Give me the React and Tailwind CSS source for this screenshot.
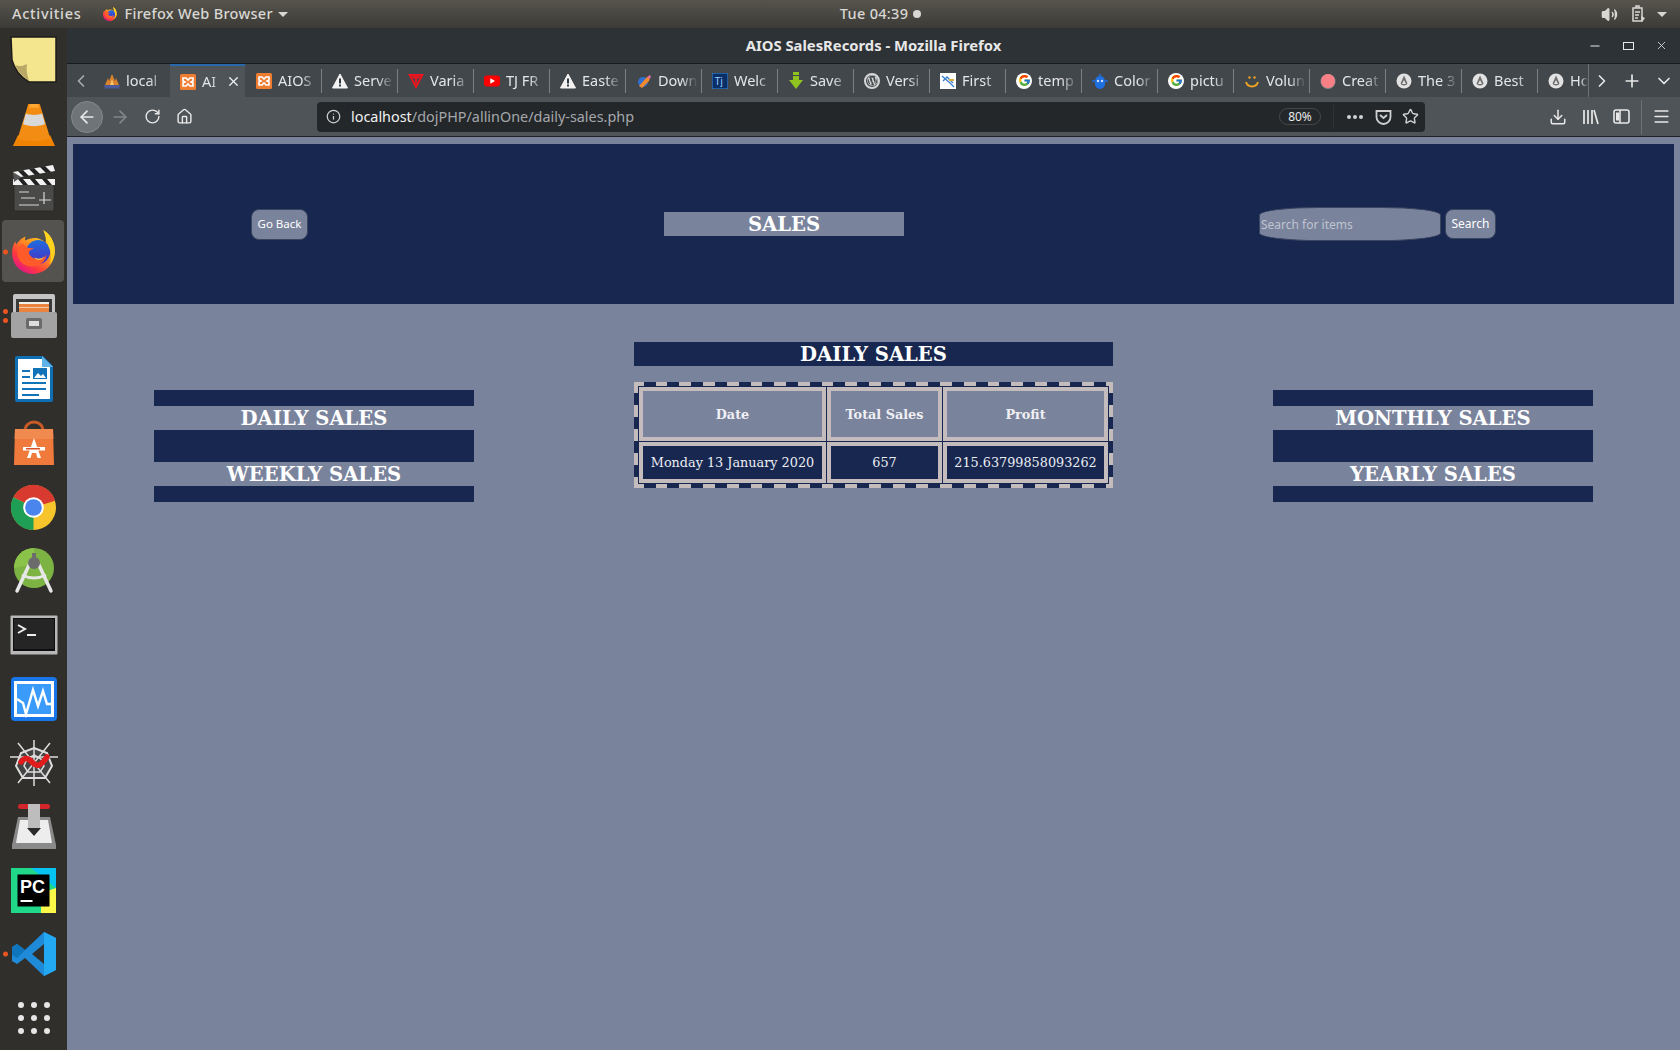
import React from "react";
import { ArrowLeft, ArrowRight, RotateCw, Home, Info, Star, Download, Menu, ChevronLeft, ChevronRight, ChevronDown, Plus, X, Volume2, Minus } from "lucide-react";
import { FaWordpressSimple } from "react-icons/fa";
import { FcGoogle } from "react-icons/fc";

const serif = "font-['DejaVu_Serif',serif]";

function FirefoxIcon({ size = 50 }) {
  return (
    <svg width={size} height={size} viewBox="0 0 48 48">
      <defs>
        <linearGradient id="ffa" x1="0.85" y1="0.05" x2="0.2" y2="0.95">
          <stop offset="0" stopColor="#ffe226" />
          <stop offset="0.4" stopColor="#ff9a1f" />
          <stop offset="0.75" stopColor="#ff3b3b" />
          <stop offset="1" stopColor="#e31587" />
        </linearGradient>
        <linearGradient id="ffb" x1="0.5" y1="0" x2="0.5" y2="1">
          <stop offset="0" stopColor="#1d6ee0" />
          <stop offset="1" stopColor="#4b2fc4" />
        </linearGradient>
      </defs>
      <path d="M33 3c6 3 11 11 11 20 0 12-9 22-21 22C11 45 3 36 3 25c0-4 1-8 3-11l1 3c2-4 6-7 9-8-1 2-1 3 0 4 3-2 8-3 12-2 4 1 6 3 7 6 1-5 0-10-2-14z" fill="url(#ffa)" />
      <circle cx="28" cy="24" r="11.5" fill="url(#ffb)" />
      <path d="M13 16c3 4 7 5 11 4-2 2-4 2-5 4 0 3 4 7 9 7 4 0 7-2 8-5 0 7-7 12-14 12-8 0-14-6-14-13 0-4 2-7 5-9z" fill="#ff5a2a" />
      <path d="M24 29c3 2 7 2 10-1-2 4-7 5-10 1z" fill="#ffd23f" />
      <path d="M33 3c6 3 11 11 11 20 0 5-2 10-5 13 2-5 2-12-1-17-1-5-3-11-5-16z" fill="#ffd21f" />
    </svg>
  );
}

const Sticky = () => (
  <svg width="50" height="50" viewBox="0 0 50 50">
    <path d="M2 2h45v45H20C13 43 6 36 3 25z" fill="#f4e58f" stroke="#1e1d1a" strokeWidth="1.5" />
    <path d="M6 30c5 2 8 1 12-1-1 5 0 11 2 17C14 42 9 36 6 30z" fill="#b9a866" />
  </svg>
);
const Vlc = () => (
  <svg width="44" height="48" viewBox="0 0 46 50">
    <path d="M1 48l5-11h34l5 11z" fill="#f08300" />
    <path d="M17 4h12l11 36c-5 4-29 4-34 0z" fill="#f28c12" />
    <path d="M14.5 14c5 2 12 2 17 0l3 11c-6 3-17 3-23 0z" fill="#d9d9d9" />
    <path d="M19 4h8l1.5 4h-11z" fill="#ffa733" />
  </svg>
);
const Clapper = () => (
  <svg width="44" height="48" viewBox="0 0 44 48">
    <rect x="2" y="18" width="40" height="29" fill="#4a4a48" stroke="#2a2a28" />
    <path d="M1 8L41 1l2 6L3 14z" fill="#f2f2f2" />
    <path d="M6 7l6 6 5-1-6-6zM17 5l6 6 5-1-6-6zM28 3l6 6 5-1-6-6z" fill="#222" />
    <rect x="1" y="15" width="42" height="6" fill="#f2f2f2" />
    <path d="M6 15l5 6h5l-5-6zM18 15l5 6h5l-5-6zM30 15l5 6h5l-5-6z" fill="#222" />
    <path d="M1 8l8 5-7 5z" fill="#555" />
    <path d="M7 28h10M9 34h14M7 41h20M27 36h12M32 28v12" stroke="#d8d8d8" strokeWidth="1.2" />
  </svg>
);
const Files = () => (
  <svg width="46" height="46" viewBox="0 0 46 46">
    <rect x="2" y="1" width="42" height="20" rx="2" fill="#c4c4c4" />
    <rect x="5" y="6" width="36" height="14" fill="#3a3a3a" />
    <rect x="8" y="9" width="30" height="2" fill="#f2f0ea" />
    <rect x="8" y="11" width="30" height="9" fill="#e8843f" />
    <rect x="8" y="14" width="30" height="1" fill="#f6c9a0" />
    <rect x="0" y="19" width="46" height="26" rx="2" fill="#a3a3a3" />
    <rect x="15" y="25" width="16" height="11" rx="2" fill="#6a6a6a" />
    <rect x="18" y="28" width="10" height="5" fill="#ddd" />
  </svg>
);
const Writer = () => (
  <svg width="42" height="48" viewBox="0 0 42 48">
    <path d="M2 3a2 2 0 012-2h26l10 10v34a2 2 0 01-2 2H4a2 2 0 01-2-2z" fill="#0f6fb5" />
    <path d="M5 4h24l8 8v32H5z" fill="#fff" />
    <path d="M29 1l11 11H29z" fill="#5fb3e6" />
    <path d="M9 15h8v2H9zM9 21h8v2H9zM9 27h24v2H9zM9 33h24v2H9zM9 39h17v2H9z" fill="#1273b8" />
    <rect x="20" y="13" width="14" height="11" fill="#1273b8" />
    <path d="M21 23l4-5 3 3 2-2 3 4z" fill="#fff" />
  </svg>
);
const Bag = () => (
  <svg width="44" height="46" viewBox="0 0 44 46">
    <path d="M13 11c0-12 18-12 18 0" fill="none" stroke="#c95a25" strokeWidth="3" />
    <path d="M3 9h38l1 36H2z" fill="#ef7a3b" />
    <path d="M3 9h38l.4 10H2.6z" fill="#f08a4e" />
    <path d="M22 18l-7 20h3.5l1.5-5h4l1.5 5H29z" fill="#fff" />
    <rect x="11" y="27" width="22" height="3.5" fill="#fff" />
    <rect x="14" y="28" width="14" height="1.5" fill="#d9532a" />
  </svg>
);
const Chrome = () => (
  <svg width="47" height="47" viewBox="0 0 48 48">
    <circle cx="24" cy="24" r="23" fill="#f7c52b" />
    <path d="M24 24L3.5 13.5A23 23 0 0 1 46 17z" fill="#d93a30" />
    <path d="M24 24L3.5 13.5A23 23 0 0 0 24 47z" fill="#1f9e55" />
    <circle cx="24" cy="24" r="10.5" fill="#fff" />
    <circle cx="24" cy="24" r="8.5" fill="#4a85ee" />
  </svg>
);
const AndroidStudio = () => (
  <svg width="44" height="48" viewBox="0 0 44 48">
    <circle cx="22" cy="21" r="20" fill="#7cb342" />
    <path d="M2 21A20 20 0 0 1 22 1v16z" fill="#8bc34a" />
    <path d="M18 16L5 44M26 16l13 28" stroke="#e7e7e7" strokeWidth="3.5" strokeLinecap="round" />
    <path d="M10 28c8 4 16 4 24 0" fill="none" stroke="#e7e7e7" strokeWidth="3" />
    <circle cx="22" cy="16" r="6" fill="#6c6c6c" />
    <rect x="20" y="6" width="4" height="5" fill="#6c6c6c" />
  </svg>
);
const Terminal = () => (
  <svg width="48" height="40" viewBox="0 0 48 40">
    <rect x="0.5" y="0.5" width="47" height="39" rx="1" fill="#b8b8b8" />
    <rect x="3" y="3" width="42" height="33" fill="#0e0e0e" />
    <rect x="4" y="4" width="40" height="30" fill="#252525" />
    <path d="M8 10l7 4-7 4" fill="none" stroke="#eee" strokeWidth="2" />
    <path d="M17 20h9" stroke="#eee" strokeWidth="2" />
  </svg>
);
const Monitor = () => (
  <svg width="48" height="46" viewBox="0 0 48 46">
    <rect x="1" y="1" width="46" height="44" rx="4" fill="#1976e8" />
    <rect x="4" y="5" width="40" height="36" fill="#fff" />
    <rect x="7" y="8" width="34" height="30" fill="#3a9bfb" />
    <path d="M7 23l6 4 3 11 7-24 5 16 5-15 4 13h5" fill="none" stroke="#fff" strokeWidth="2.4" />
  </svg>
);
const Web = () => (
  <svg width="50" height="50" viewBox="0 0 50 50">
    <path d="M25 10l13 5 5 13-7 12H14L7 28l5-13z" fill="#444" stroke="#ddd" strokeWidth="2" />
    <path d="M25 17l7 4 3 7-4 6H19l-4-6 3-7z" fill="none" stroke="#ddd" strokeWidth="1.5" />
    <path d="M25 2v46M1 19l48 0M9 5l32 40M41 5L9 45" stroke="#ddd" strokeWidth="1.5" />
    <path d="M12 24c5-6 8-3 12 1s8 3 14-6" fill="none" stroke="#e01b1b" strokeWidth="5.5" strokeLinecap="round" />
  </svg>
);
const Transmission = () => (
  <svg width="44" height="48" viewBox="0 0 44 48">
    <rect x="6" y="1" width="32" height="5" rx="2.5" fill="#d3262a" />
    <path d="M6 14h32l6 28v4H0v-4z" fill="#8a8a8a" />
    <path d="M8 17h28l4 23H4z" fill="#ededed" />
    <rect x="16" y="1" width="12" height="24" fill="#bdbdbd" />
    <path d="M15 25h14l-7 8z" fill="#2a2a2a" />
  </svg>
);
const PyCharm = () => (
  <svg width="45" height="45" viewBox="0 0 45 45">
    <rect width="45" height="45" fill="#21d789" />
    <path d="M20 0h25v20z" fill="#07c3f2" />
    <path d="M30 45h15V20l-15 5z" fill="#fcf84a" />
    <rect x="6.5" y="6.5" width="32" height="32" fill="#000" />
    <text x="9" y="25" fill="#fff" fontSize="18" fontWeight="700" fontFamily="'Liberation Sans',sans-serif">PC</text>
    <rect x="9.5" y="32" width="12" height="2" fill="#fff" />
  </svg>
);
const VSCode = () => (
  <svg width="46" height="46" viewBox="0 0 46 46">
    <path d="M33 1l12 6v32l-12 6-19-18-8 6-5-3V16l5-3 8 6zM33 13L21 23l12 10z" fill="#1f8ad8" />
    <path d="M33 1L6 27l-5-3V16l5-3 8 6z" fill="#0f76bd" />
    <path d="M33 1l12 6v32l-12 6z" fill="#23a9f2" />
  </svg>
);
const Grid = () => (
  <svg width="32" height="32" viewBox="0 0 32 32" fill="#e6e6e6">
    {[3, 16, 29].flatMap((y) => [3, 16, 29].map((x) => <circle key={`${x}-${y}`} cx={x} cy={y} r="3" />))}
  </svg>
);

const dock = [
  { I: Sticky },
  { I: Vlc },
  { I: Clapper },
  { I: FirefoxIcon, active: true, dots: 1 },
  { I: Files, dots: 2 },
  { I: Writer },
  { I: Bag },
  { I: Chrome },
  { I: AndroidStudio },
  { I: Terminal },
  { I: Monitor },
  { I: Web },
  { I: Transmission },
  { I: PyCharm },
  { I: VSCode, dots: 1 },
  { I: Grid },
];

const Xampp = () => (
  <svg width="16" height="16" viewBox="0 0 16 16">
    <rect width="16" height="16" rx="1.5" fill="#ef7d31" />
    <path d="M3 4h3l2 2 2-2h3v3l-2 1 2 1v3h-3L8 10l-2 2H3V9l2-1-2-1z" fill="none" stroke="#fff" strokeWidth="1.6" />
  </svg>
);
const Warn = () => (
  <svg width="16" height="16" viewBox="0 0 16 16">
    <path d="M8 1l7.5 14H.5z" fill="#f2f2f2" stroke="#f2f2f2" strokeLinejoin="round" />
    <path d="M8 5.5v5M8 11.5v2" stroke="#33383c" strokeWidth="2" />
  </svg>
);
const Favs = {
  apache: () => (
    <svg width="16" height="16" viewBox="0 0 16 16">
      <path d="M1 12L4 5l1 3 3-7 3 7 1-3 3 7z" fill="#d9822b" />
      <path d="M6 12l2-6 2 6z" fill="#f6c26b" />
      <rect x="0.5" y="12" width="15" height="3.5" fill="#4a5a9a" />
    </svg>
  ),
  xampp: Xampp,
  warn: Warn,
  varia: () => (
    <svg width="16" height="16" viewBox="0 0 16 16">
      <path d="M0 1h16L8 16z" fill="#f0141e" />
      <path d="M3.5 3.5h9L8 12z" fill="#3f4448" />
      <path d="M4.5 4.5h7M8 4.5v6" stroke="#f0141e" strokeWidth="1.8" />
    </svg>
  ),
  yt: () => (
    <svg width="16" height="16" viewBox="0 0 16 16">
      <rect y="2.5" width="16" height="11" rx="3" fill="#f00" />
      <path d="M6.3 5.3L11 8l-4.7 2.7z" fill="#fff" />
    </svg>
  ),
  down: () => (
    <svg width="16" height="16" viewBox="0 0 16 16">
      <circle cx="7" cy="9" r="5" fill="#2f6fd0" />
      <path d="M3 13L11 4l3 1-1 3-7 7z" fill="#f08a2c" />
      <path d="M11 4l3-2 1 2-2 2z" fill="#e86aa0" />
    </svg>
  ),
  tj: () => (
    <svg width="16" height="16" viewBox="0 0 16 16">
      <rect width="16" height="16" fill="#0a2f66" stroke="#3f8fe0" />
      <text x="2.5" y="12" fontSize="10" fill="#9ad0ff" fontFamily="'Liberation Sans',sans-serif">Tj</text>
    </svg>
  ),
  save: () => (
    <svg width="16" height="18" viewBox="0 0 16 18">
      <path d="M5 0h6v3H5zM5 4h6V8h4l-7 9L1 8h4z" fill="#8fc31f" />
    </svg>
  ),
  wp: () => (
    <span className="flex h-4 w-4 items-center justify-center rounded-full border-2 border-[#d6d6d6] text-[#d6d6d6]">
      <FaWordpressSimple size={11} />
    </span>
  ),
  first: () => (
    <svg width="16" height="16" viewBox="0 0 16 16">
      <rect width="16" height="16" fill="#fff" />
      <path d="M2 3l8 7 4 4M3 8l4-4 6 6" fill="none" stroke="#3b7fd0" strokeWidth="1.3" />
      <path d="M9 6h5v2H9z" fill="#d9b13b" />
    </svg>
  ),
  g: () => (
    <span className="flex h-4 w-4 items-center justify-center rounded-full bg-white">
      <FcGoogle size={13} />
    </span>
  ),
  color: () => (
    <svg width="16" height="16" viewBox="0 0 16 16">
      <path d="M8 1v3" stroke="#1e6fe0" strokeWidth="1.5" />
      <path d="M3 8a5 5 0 0110 0v3a4 4 0 01-10 0z" fill="#1e6fe0" />
      <circle cx="6" cy="8" r="1.2" fill="#cfe2ff" />
      <circle cx="10" cy="8" r="1.2" fill="#cfe2ff" />
      <path d="M0 8h3M13 8h3" stroke="#1e6fe0" strokeWidth="1.5" />
    </svg>
  ),
  smile: () => (
    <svg width="16" height="16" viewBox="0 0 16 16">
      <circle cx="5.5" cy="4.5" r="1.2" fill="#eea320" />
      <circle cx="10.5" cy="4.5" r="1.2" fill="#eea320" />
      <path d="M2 9c2 6 10 6 12 0" fill="none" stroke="#eea320" strokeWidth="2" />
    </svg>
  ),
  pink: () => (
    <svg width="16" height="16" viewBox="0 0 16 16">
      <circle cx="8" cy="8.5" r="7.5" fill="#8a8a8a" />
      <circle cx="8" cy="8" r="7" fill="#f77f86" />
    </svg>
  ),
  drop: () => (
    <svg width="16" height="16" viewBox="0 0 16 16">
      <circle cx="8" cy="8" r="7.5" fill="#e2e2e2" />
      <path d="M8 2.5l3.5 8c-1 2.5-6 2.5-7 0z" fill="#6d6d6d" />
      <path d="M8 7l2 4H6z" fill="#e2e2e2" />
    </svg>
  ),
};

const tabs = [
  ["apache", "local", false],
  ["xampp", "AI", false, true],
  ["xampp", "AIOS", true],
  ["warn", "Serve", true],
  ["varia", "Varia", true],
  ["yt", "TJ FR", true],
  ["warn", "Easte", true],
  ["down", "Down", true],
  ["tj", "Welc", true],
  ["save", "Save", true],
  ["wp", "Versi", true],
  ["first", "First", true],
  ["g", "temp", true],
  ["color", "Color", true],
  ["g", "pictu", true],
  ["smile", "Volun", true],
  ["pink", "Creat", true],
  ["drop", "The 3", true],
  ["drop", "Best", true],
  ["drop", "Ho", false, false, true],
];

function Tab({ fav, label, sep, active, last }) {
  const F = Favs[fav];
  return (
    <div className={`flex h-full items-center ${last ? "w-[50px] shrink" : "shrink-0"}`}>
      <div
        className={`flex h-full items-center pl-[10px] ${last ? "w-[50px]" : "w-[75px]"} ${
          active ? "border-t-2 border-[#2a68ad] bg-[#4f5459]" : ""
        }`}
      >
        <span className="flex w-4 shrink-0 items-center justify-center">
          <F />
        </span>
        <span
          className={`ml-[6px] whitespace-nowrap text-[14.5px] text-[#e4e5e6] [mask-image:linear-gradient(to_right,black_58%,transparent)] ${
            active ? "w-[18px]" : last ? "w-[18px] text-[13.5px]" : "w-[40px]"
          }`}
        >
          {label}
        </span>
        {active && <X size={15} className="ml-[6px] shrink-0 text-[#f0f0f0]" strokeWidth={2} />}
      </div>
      {!last && <div className={`h-6 w-px ${sep ? "bg-[#7b8084]" : ""}`} />}
    </div>
  );
}

function Dock() {
  return (
    <aside className="flex w-[67px] shrink-0 flex-col overflow-hidden bg-[#312f2c]">
      {dock.map(({ I, active, dots }, i) => (
        <div key={i} className="relative flex h-[63.9px] w-[67px] shrink-0 items-center justify-center">
          {active && <div className="absolute left-[2px] top-0 h-[62px] w-[62px] rounded bg-[#55534f]" />}
          {dots && (
            <div className="absolute left-[3px] top-1/2 flex -translate-y-1/2 flex-col gap-[4px]">
              {Array.from({ length: dots }).map((_, k) => (
                <span key={k} className="block h-[5px] w-[5px] rounded-full bg-[#e95420]" />
              ))}
            </div>
          )}
          <div className="relative flex items-center justify-center">
            <I />
          </div>
        </div>
      ))}
    </aside>
  );
}

function TopBar() {
  return (
    <header className="relative flex h-[28px] shrink-0 items-center bg-gradient-to-b from-[#57544d] to-[#3c3b37] font-['Noto_Sans',sans-serif] text-[14.5px] font-medium text-[#d8d7d3]">
      <span className="ml-3 tracking-[0.7px]">Activities</span>
      <span className="ml-[21px]">
        <FirefoxIcon size={16} />
      </span>
      <span className="ml-[6px] tracking-[0.3px]">Firefox Web Browser</span>
      <span className="ml-[5px] h-0 w-0 border-x-[5px] border-t-[5px] border-x-transparent border-t-[#d8d7d3]" />
      <span className="ml-[552px] tracking-[0.3px]">Tue 04:39</span>
      <span className="ml-[5px] h-2 w-2 rounded-full bg-[#d8d7d3]" />
      <div className="ml-auto flex items-center pr-[13px]">
        <Volume2 size={17} fill="#d8d7d3" />
        <svg className="ml-[12px]" width="16" height="18" viewBox="0 0 16 18" fill="none" stroke="#d8d7d3" strokeWidth="1.5">
          <path d="M3 3h9v13H3zM6 3V1h3v2" />
          <path d="M5 7h5M5 10h4M5 13h3" />
          <path d="M11 11l4 2-3 4z" fill="#d8d7d3" stroke="none" />
        </svg>
        <span className="ml-[11px] h-0 w-0 border-x-[5px] border-t-[5px] border-x-transparent border-t-[#d8d7d3]" />
      </div>
    </header>
  );
}

function Browser() {
  return (
    <div className="shrink-0 font-['Noto_Sans',sans-serif]">
      <div className="relative flex h-[36px] items-center justify-center border-b border-[#191b1d] bg-[#2d3236]">
        <span className="text-[14.8px] font-bold text-[#e8e8e8]">AIOS SalesRecords - Mozilla Firefox</span>
        <div className="absolute right-[12px] top-0 flex h-full items-center gap-[21px] text-[#e8e8e8]">
          <Minus size={14} strokeWidth={2} />
          <span className="block h-[8px] w-[11px] border-[1.5px] border-[#e8e8e8]" />
          <X size={13} strokeWidth={1.5} />
        </div>
      </div>
      <div className="flex h-[33px] items-center bg-[#42474b]">
        <div className="flex w-[27px] shrink-0 justify-center text-[#a9acae]">
          <ChevronLeft size={20} />
        </div>
        <div className="flex h-full w-[1494px] shrink-0 overflow-hidden">
          {tabs.map(([f, l, s, a, e], i) => (
            <Tab key={i} fav={f} label={l} sep={s} active={a} last={e} />
          ))}
        </div>
        <div className="flex h-full flex-1 items-center border-l border-[#6c7175] text-[#e8e8e8]">
          <ChevronRight size={20} className="ml-[3px]" />
          <Plus size={20} className="ml-[10px]" />
          <ChevronDown size={20} className="ml-[12px]" />
        </div>
      </div>
      <div className="flex h-[40px] items-center border-b border-[#1f2225] bg-[#4f5458] text-[#e8e8e8]">
        <div className="ml-[4px] flex h-8 w-8 items-center justify-center rounded-full border border-[#85898c] bg-[#6f7478]">
          <ArrowLeft size={20} />
        </div>
        <ArrowRight size={20} className="ml-[7px] text-[#83878a]" />
        <RotateCw size={17} className="ml-[14px]" />
        <Home size={17} className="ml-[15px]" />
        <div className="ml-[124px] flex h-[30px] w-[1108px] items-center rounded bg-[#23272a]">
          <Info size={15} className="ml-[9px] text-[#d0d0d0]" />
          <span className="ml-[10px] whitespace-nowrap text-[14.4px] text-[#f2f2f2]">
            localhost<span className="text-[#a5a8aa]">/dojPHP/allinOne/daily-sales.php</span>
          </span>
          <div className="ml-auto flex items-center">
            <span className="flex h-[17px] w-[42px] items-center justify-center rounded-full border border-[#44484b] text-[12px]">80%</span>
            <span className="ml-3 h-6 w-px bg-[#2f3336]" />
            <span className="ml-[13px] flex gap-[2px]">
              <i className="block h-[4px] w-[4px] rounded-full bg-[#d0d0d0]" />
              <i className="block h-[4px] w-[4px] rounded-full bg-[#d0d0d0]" />
              <i className="block h-[4px] w-[4px] rounded-full bg-[#d0d0d0]" />
            </span>
            <svg className="ml-[12px]" width="17" height="16" viewBox="0 0 17 16" fill="none" stroke="#d0d0d0" strokeWidth="1.8">
              <path d="M1.5 2h14v6a7 7 0 01-14 0z" />
              <path d="M5 6l3.5 3L12 6" />
            </svg>
            <Star size={17} className="ml-[10px] mr-[6px] text-[#d0d0d0]" />
          </div>
        </div>
        <div className="ml-[124px] flex items-center">
          <Download size={18} />
          <svg className="ml-[15px]" width="17" height="16" viewBox="0 0 17 16" fill="none" stroke="#e8e8e8" strokeWidth="1.7">
            <path d="M2 1v14M6 1v14M10 1v14M12 1l4 14" />
          </svg>
          <svg className="ml-[14px]" width="17" height="15" viewBox="0 0 17 15" fill="none" stroke="#e8e8e8" strokeWidth="1.6">
            <rect x="1" y="1" width="15" height="13" rx="2" />
            <path d="M3 3.5h3v8H3z" fill="#e8e8e8" stroke="none" />
            <path d="M7 1v13" />
          </svg>
          <span className="ml-[11px] h-[34px] w-px bg-[#6c7175]" />
          <Menu size={19} className="ml-[10px]" />
        </div>
      </div>
    </div>
  );
}

const Band = ({ className = "" }) => <div className={`bg-[#18274f] ${className}`} />;

function SideMenu({ a, b }) {
  return (
    <div className={`w-[320px] ${serif}`}>
      <Band className="h-4" />
      <h3 className="h-6 pt-px text-center text-[19.6px] font-bold leading-6 text-white">{a}</h3>
      <Band className="h-8" />
      <h3 className="h-6 pt-px text-center text-[19.6px] font-bold leading-6 text-white">{b}</h3>
      <Band className="h-4" />
    </div>
  );
}

const thCls = "border-4 border-[#c4bcbc] pt-px text-[12.8px] font-bold text-[#f0f0f4]";
const tdCls = "border-4 border-[#c4bcbc] bg-[#18274f] text-[12.8px] font-normal text-[#eceef4]";

function Page() {
  return (
    <main className="flex-1 bg-[#7a839c] pt-[7px]">
      <section className="ml-[6px] mr-[6px] flex h-40 items-center bg-[#18274f] pl-[178px]">
        <button className="flex h-[31px] w-[57px] items-center justify-center rounded-lg border border-[#3a4560] bg-[#7a839c] font-['Noto_Sans',sans-serif] text-[11.5px] text-white">
          Go Back
        </button>
        <h2 className={`ml-[356px] flex h-6 w-[240px] items-center justify-center bg-[#7a839c] pt-px text-[19.6px] font-bold text-white ${serif}`}>
          SALES
        </h2>
        <div className="ml-[355px] flex items-center gap-[4px] font-['Noto_Sans',sans-serif] text-[12px]">
          <div className="flex h-[34px] w-[182px] items-center rounded-[60px/8px] border border-[#3a4560] bg-[#7a839c] pl-[1px] pt-px text-[#bfc4d0]">
            Search for items
          </div>
          <button className="flex h-[30px] w-[51px] items-center justify-center rounded-lg border border-[#3a4560] bg-[#7a839c] text-white">
            Search
          </button>
        </div>
      </section>
      <div className="flex items-start pl-[87px] pt-[38px]">
        <div className="mt-[48px]">
          <SideMenu a="DAILY SALES" b="WEEKLY SALES" />
        </div>
        <div className={`ml-[160px] w-[479px] ${serif}`}>
          <h2 className="flex h-6 items-center justify-center bg-[#18274f] pt-px text-[19.6px] font-bold text-white">DAILY SALES</h2>
          <div className="mt-4 w-[479px] p-1 [background:repeating-linear-gradient(90deg,#c4bcbc_0,#c4bcbc_9.8px,#18274f_9.8px,#18274f_21.7px,#c4bcbc_21.7px,#c4bcbc_23.7px)_top/100%_4px_no-repeat,repeating-linear-gradient(90deg,#c4bcbc_0,#c4bcbc_9.8px,#18274f_9.8px,#18274f_21.7px,#c4bcbc_21.7px,#c4bcbc_23.7px)_bottom/100%_4px_no-repeat,repeating-linear-gradient(180deg,#c4bcbc_0,#c4bcbc_11px,#18274f_11px,#18274f_23px,#c4bcbc_23px,#c4bcbc_24px)_left/4px_100%_no-repeat,repeating-linear-gradient(180deg,#c4bcbc_0,#c4bcbc_11px,#18274f_11px,#18274f_23px,#c4bcbc_23px,#c4bcbc_24px)_right/4px_100%_no-repeat,#18274f]">
            <table className="h-[98px] w-[471px] table-fixed border-separate border-spacing-[1.6px] bg-[#18274f] text-center">
              <colgroup>
                <col className="w-[187px]" />
                <col className="w-[115px]" />
                <col className="w-[165px]" />
              </colgroup>
              <thead>
                <tr className="h-[54px] bg-[#7a839c]">
                  <th className={thCls}>Date</th>
                  <th className={thCls}>Total Sales</th>
                  <th className={thCls}>Profit</th>
                </tr>
              </thead>
              <tbody>
                <tr className="h-[40px]">
                  <td className={tdCls}>Monday 13 January 2020</td>
                  <td className={tdCls}>657</td>
                  <td className={tdCls}>215.63799858093262</td>
                </tr>
              </tbody>
            </table>
          </div>
        </div>
        <div className="ml-[160px] mt-[48px]">
          <SideMenu a="MONTHLY SALES" b="YEARLY SALES" />
        </div>
      </div>
    </main>
  );
}

export default function App() {
  return (
    <div className="flex h-[1050px] w-[1680px] flex-col overflow-hidden">
      <TopBar />
      <div className="flex min-h-0 flex-1">
        <Dock />
        <div className="flex flex-1 flex-col">
          <Browser />
          <Page />
        </div>
      </div>
    </div>
  );
}
